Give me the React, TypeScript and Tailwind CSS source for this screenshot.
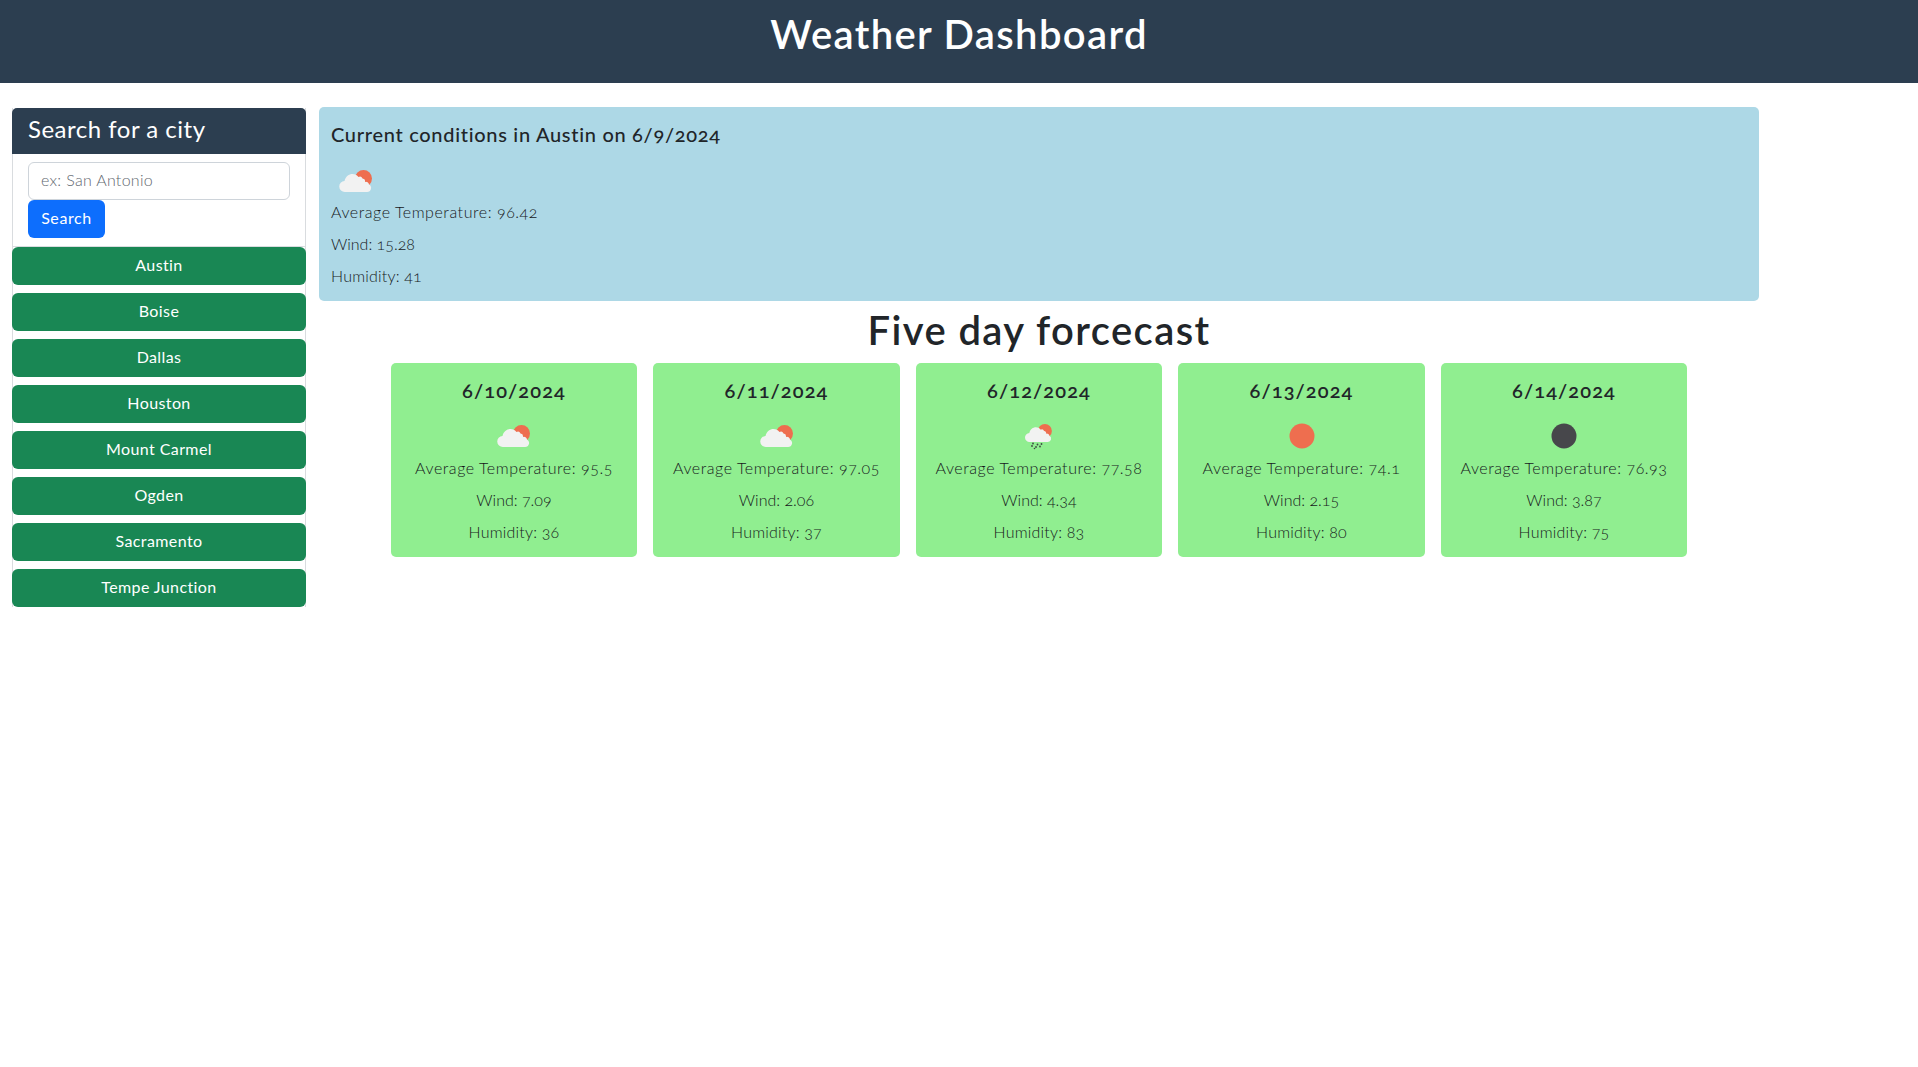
const font = "[font-family:Lato,'Open_Sans',sans-serif]";

type Kind = 'cloud' | 'rain' | 'sun' | 'moon';

const cloudPath =
  'M6 28A5.500 5.500 0 0 1 5.500 17C6.500 12.500 10 10 13.500 10C16 10 18 11 19.500 13A3 3 0 0 1 23.500 14.500A3 3 0 0 1 26 18A3 3 0 0 1 30 20.500A4 4 0 0 1 28 28Z';

// Weather icons drawn to match the OpenWeather style glyphs
function WeatherIcon({ kind }: { kind: Kind }) {
  if (kind === 'sun' || kind === 'moon') {
    return (
      <svg width="34" height="34" viewBox="0 0 34 34" className="block">
        <circle cx="17" cy="17" r="12.5" fill={kind === 'sun' ? '#ee6e4f' : '#47474b'} />
      </svg>
    );
  }
  return (
    <svg width="34" height="34" viewBox="0 0 34 34" className="block">
      <g transform={kind === 'rain' ? 'translate(2.800 0) scale(.82)' : undefined}>
        <circle cx="24.500" cy="14.500" r="8.500" fill="#ee6e4f" />
        <path d={cloudPath} fill="#f2f2f2" />
      </g>
      {kind === 'rain' && (
        <g fill="#3f4a44">
          <circle cx="11" cy="24.500" r="0.9" />
          <circle cx="15.500" cy="25.500" r="0.9" />
          <circle cx="19.500" cy="25" r="0.9" />
          <circle cx="10" cy="27" r="0.9" />
          <circle cx="14" cy="28" r="0.9" />
          <circle cx="18" cy="27.500" r="0.9" />
          <circle cx="12.500" cy="29.500" r="0.8" />
        </g>
      )}
    </svg>
  );
}

// Three stat lines shared by the current panel and the forecast cards
function Stats({ temp, wind, humidity, center }: { temp: string; wind: string; humidity: string; center?: boolean }) {
  return (
    <div className={`flex flex-col gap-[8px] text-[16px] leading-[24px] font-light text-[#16191c] ${center ? 'text-center' : ''}`}>
      <p className="tracking-[0.550px]">Average Temperature: {temp}</p>
      <p>Wind: {wind}</p>
      <p className="tracking-[0.200px]">Humidity: {humidity}</p>
    </div>
  );
}

const cities = ['Austin', 'Boise', 'Dallas', 'Houston', 'Mount Carmel', 'Ogden', 'Sacramento', 'Tempe Junction'];

const forecast: { date: string; kind: Kind; temp: string; wind: string; humidity: string }[] = [
  { date: '6/10/2024', kind: 'cloud', temp: '95.5', wind: '7.09', humidity: '36' },
  { date: '6/11/2024', kind: 'cloud', temp: '97.05', wind: '2.06', humidity: '37' },
  { date: '6/12/2024', kind: 'rain', temp: '77.58', wind: '4.34', humidity: '83' },
  { date: '6/13/2024', kind: 'sun', temp: '74.1', wind: '2.15', humidity: '80' },
  { date: '6/14/2024', kind: 'moon', temp: '76.93', wind: '3.87', humidity: '75' },
];

export default function App() {
  return (
    <div className={`min-h-screen bg-white text-[#212529] oldstyle-nums ${font}`}>
      {/* Page header */}
      <header className="h-[83px] bg-[#2c3e50] pt-[10px] text-center">
        <h1 className="text-[40px] leading-[48px] font-semibold tracking-[1.350px] text-white">Weather Dashboard</h1>
      </header>

      <div className="flex items-start pl-[12px] pt-[24px]">
        {/* Search sidebar */}
        <aside className="mt-px w-[294px] border-x border-[#d9dcdf]">
          <h2 className="-mx-px h-[46px] rounded-t-[5px] bg-[#2c3e50] pl-[16px] text-[24px] leading-[41px] tracking-[0.500px] text-white">
            Search for a city
          </h2>
          <div className="px-[15px] pt-[8px] pb-[8px]">
            <input
              placeholder="ex: San Antonio"
              className="block h-[38px] w-[262px] rounded-[6px] border border-[#ced4da] px-[12px] pb-[3px] text-[16px] font-light tracking-[0.300px] placeholder:text-[#5f6870]"
            />
            <button className="block h-[38px] w-[77px] rounded-[6px] bg-[#0d6efd] pb-[2px] text-[16px] tracking-[0.600px] text-white">Search</button>
          </div>
          <div className="-mx-px flex flex-col gap-[8px] border-t border-[#d9dcdf]">
            {cities.map((city) => (
              <button key={city} className="h-[38px] w-full rounded-[6px] bg-[#198754] pb-[2px] text-[16px] tracking-[0.400px] text-white">
                {city}
              </button>
            ))}
          </div>
        </aside>

        <main className="ml-[13px] w-[1440px]">
          {/* Current conditions */}
          <section className="h-[194px] rounded-[5px] bg-[#add8e6] pl-[12px] pt-[15px]">
            <h3 className="text-[20px] leading-[24px] font-medium tracking-[0.700px]">Current conditions in Austin on 6/9/2024</h3>
            <div className="mt-[18px] mb-[2px] ml-[8px]">
              <WeatherIcon kind="cloud" />
            </div>
            <Stats temp="96.42" wind="15.28" humidity="41" />
          </section>

          <h2 className="mt-[5px] text-center text-[40px] leading-[48px] font-semibold tracking-[1.400px]">Five day forcecast</h2>

          {/* Forecast cards */}
          <div className="mt-[9px] flex justify-center gap-[16px]">
            {forecast.map((day) => (
              <div key={day.date} className="flex h-[194px] w-[246.500px] flex-col items-center rounded-[5px] bg-[#90ee90] pt-[15px]">
                <h4 className="text-[20px] leading-[24px] font-semibold tracking-[1.100px]">{day.date}</h4>
                <div className="mt-[17px] mb-[3px]">
                  <WeatherIcon kind={day.kind} />
                </div>
                <Stats temp={day.temp} wind={day.wind} humidity={day.humidity} center />
              </div>
            ))}
          </div>
        </main>
      </div>
    </div>
  );
}
